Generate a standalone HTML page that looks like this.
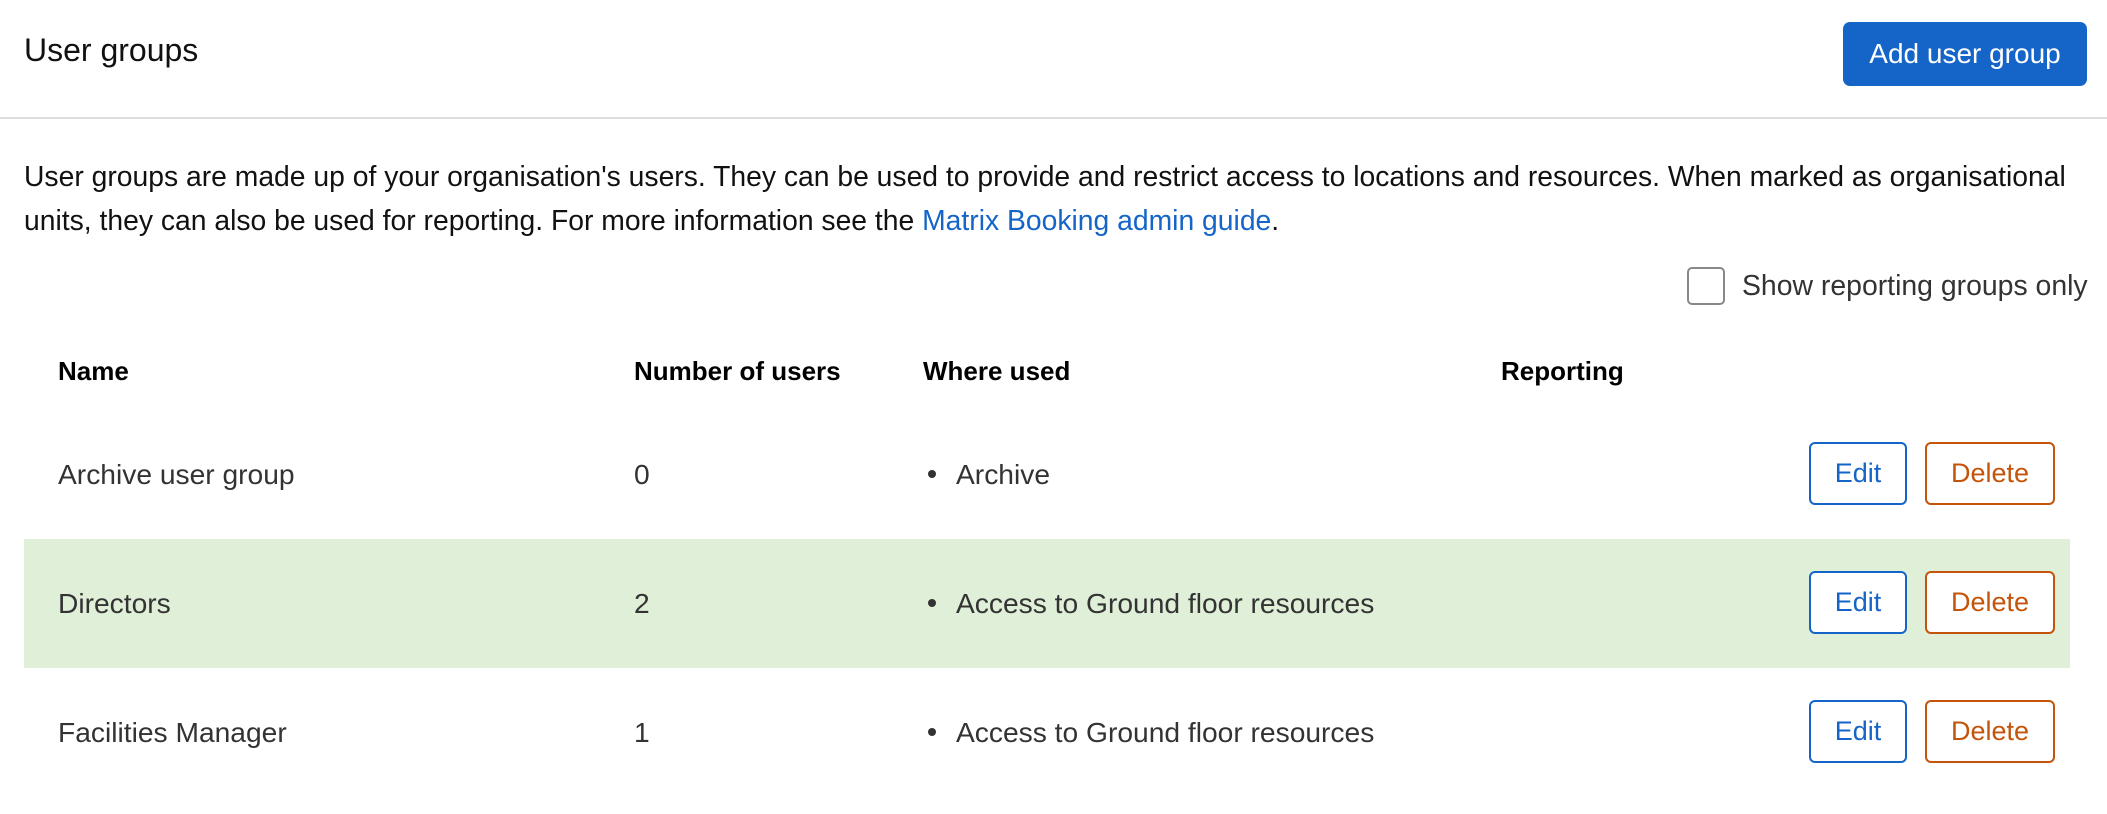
<!DOCTYPE html>
<html><head><meta charset="utf-8"><style>
*{margin:0;padding:0;box-sizing:border-box}
body{width:2107px;height:814px;background:#fff;font-family:"Liberation Sans",Arial,sans-serif;color:#222;position:relative;overflow:hidden}
.a{position:absolute;white-space:nowrap}
.title{left:24px;top:30px;font-size:32px;line-height:40px;color:#111}
.sep{left:0;top:117px;width:2107px;height:2px;background:#ddd}
.add{left:1843px;top:22px;width:244px;height:64px;background:#1565c8;border-radius:7px;color:#fff;font-size:28px;line-height:64px;text-align:center}
.p{left:24px;top:154px;font-size:28.3px;line-height:44px;color:#111}
.p a{color:#1565c8;text-decoration:none}
.cb{left:1687px;top:267px;width:38px;height:38px;border:2px solid #888;border-radius:5px}
.cbl{left:1742px;top:270px;font-size:28.4px;line-height:32px;color:#333}
.th{top:355px;font-size:26px;font-weight:bold;line-height:32px;color:#000}
.row{left:24px;width:2046px;height:129px}
.td{font-size:28.2px;line-height:32px;color:#333}
.dot{width:8px;height:8px;border-radius:50%;background:#333}
.btn{height:63px;border:2px solid;border-radius:6px;font-size:27px;line-height:59px;text-align:center;background:#fff}
.e{width:98px;color:#1565c8;border-color:#1565c8}
.d{width:130px;color:#c4540a;border-color:#c4540a}
</style></head><body>
<div class="a title">User groups</div>
<div class="a add">Add user group</div>
<div class="a sep"></div>
<div class="a p">User groups are made up of your organisation's users. They can be used to provide and restrict access to locations and resources. When marked as organisational<br>units, they can also be used for reporting. For more information see the <a>Matrix Booking admin guide</a>.</div>
<div class="a cb"></div>
<div class="a cbl">Show reporting groups only</div>
<div class="a th" style="left:58px">Name</div>
<div class="a th" style="left:634px">Number of users</div>
<div class="a th" style="left:923px">Where used</div>
<div class="a th" style="left:1501px">Reporting</div>

<div class="a row" style="top:410px"></div>
<div class="a row" style="top:539px;background:#e0efd8"></div>
<div class="a row" style="top:668px"></div>

<div class="a td" style="left:58px;top:458px">Archive user group</div>
<div class="a td" style="left:634px;top:458px">0</div>
<div class="a dot" style="left:928px;top:470px"></div>
<div class="a td" style="left:956px;top:458px">Archive</div>
<div class="a btn e" style="left:1809px;top:442px">Edit</div>
<div class="a btn d" style="left:1925px;top:442px">Delete</div>

<div class="a td" style="left:58px;top:587px">Directors</div>
<div class="a td" style="left:634px;top:587px">2</div>
<div class="a dot" style="left:928px;top:599px"></div>
<div class="a td" style="left:956px;top:587px">Access to Ground floor resources</div>
<div class="a btn e" style="left:1809px;top:571px">Edit</div>
<div class="a btn d" style="left:1925px;top:571px">Delete</div>

<div class="a td" style="left:58px;top:716px">Facilities Manager</div>
<div class="a td" style="left:634px;top:716px">1</div>
<div class="a dot" style="left:928px;top:728px"></div>
<div class="a td" style="left:956px;top:716px">Access to Ground floor resources</div>
<div class="a btn e" style="left:1809px;top:700px">Edit</div>
<div class="a btn d" style="left:1925px;top:700px">Delete</div>
</body></html>
